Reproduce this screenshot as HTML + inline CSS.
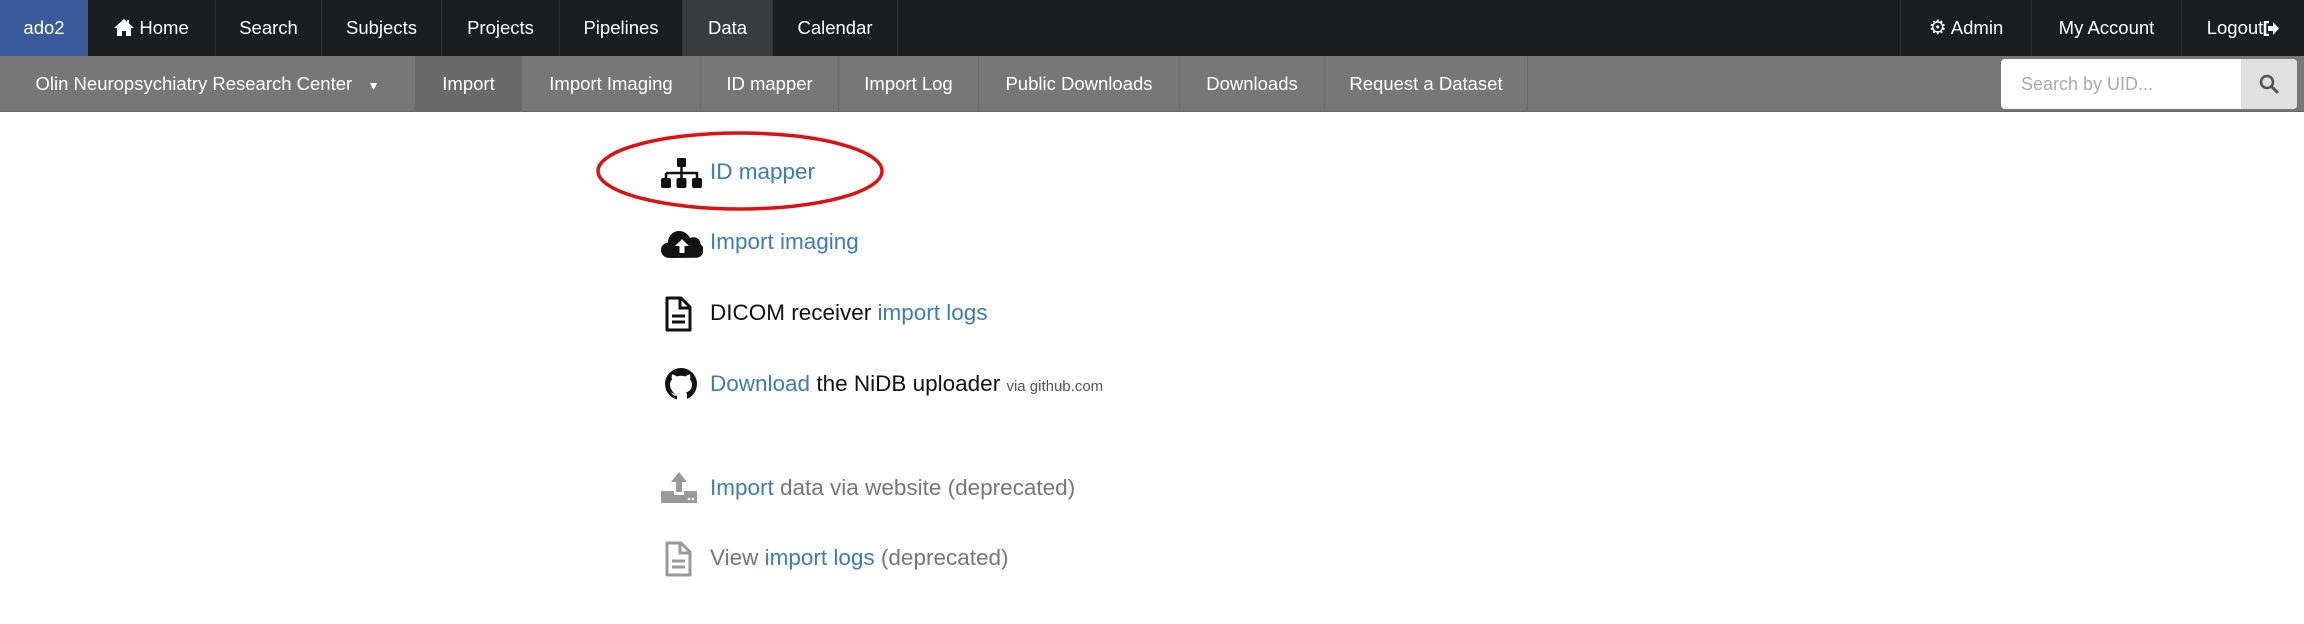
<!DOCTYPE html>
<html><head><meta charset="utf-8"><style>
*{box-sizing:border-box;margin:0;padding:0}
body{width:2304px;height:624px;background:#fff;font-family:"Liberation Sans",sans-serif;position:relative;overflow:hidden}
.bar1{position:absolute;left:0;top:0;width:2304px;height:56px;background:#1c1d1f}
.bar2{position:absolute;left:0;top:56px;width:2304px;height:56px;background:#777;border-bottom:1px solid #666}
.it{position:absolute;top:0;height:56px;line-height:56px;text-align:center;color:#fff;font-size:18.5px;border-right:1px solid #333}
.bar2 .it{border-right:1px solid #6a6a6a;color:#fff}
.row{position:absolute;left:661px;font-size:22.5px;color:#111;height:34px;line-height:34px;white-space:nowrap}
.row svg{position:absolute;left:0;top:3px}
.row span.t{position:absolute;left:49px}
a{color:#3c7bbf;text-decoration:none}
.g{color:#777}
</style></head><body>
<div class="bar1">
<div class="it" style="left:0;width:88px;background:#3a5a9c;border:none">ado2</div>
<div class="it" style="left:88px;width:128px"><svg width="20" height="17" viewBox="0 0 20 17" style="vertical-align:-2px"><path d="M10 0L0 9h3v8h5v-5h4v5h5V9h3L15 4.5V1h-2v1.7z" fill="#fff"/></svg> Home</div>
<div class="it" style="left:216px;width:106px">Search</div>
<div class="it" style="left:322px;width:120px">Subjects</div>
<div class="it" style="left:442px;width:118px">Projects</div>
<div class="it" style="left:560px;width:123px">Pipelines</div>
<div class="it" style="left:683px;width:90px;background:#3a3b3d">Data</div>
<div class="it" style="left:773px;width:125px">Calendar</div>
<div class="it" style="left:1900px;width:132px;border-left:1px solid #333"><span style="font-size:20px">⚙</span> Admin</div>
<div class="it" style="left:2032px;width:150px">My Account</div>
<div class="it" style="left:2182px;width:122px;border:none">Logout<svg width="16" height="15" viewBox="0 0 16 15" style="vertical-align:-2px"><path d="M6 1H2v13h4" stroke="#fff" stroke-width="2.5" fill="none"/><path d="M5 5h5V1l6 6.5-6 6.5v-4H5z" fill="#fff"/></svg></div>
</div>
<div class="bar2">
<div class="it" style="left:0;width:416px">Olin Neuropsychiatry Research Center &nbsp; <span style="font-size:12px">▼</span></div>
<div class="it" style="left:416px;width:106px;background:#6a6a6a">Import</div>
<div class="it" style="left:522px;width:179px">Import Imaging</div>
<div class="it" style="left:701px;width:138px">ID mapper</div>
<div class="it" style="left:839px;width:140px">Import Log</div>
<div class="it" style="left:979px;width:201px">Public Downloads</div>
<div class="it" style="left:1180px;width:145px">Downloads</div>
<div class="it" style="left:1325px;width:203px">Request a Dataset</div>
<div style="position:absolute;left:2001px;top:3px;width:296px;height:50px;background:#fff;border-radius:4px;overflow:hidden">
<span style="position:absolute;left:20px;top:0;line-height:50px;font-size:18px;color:#aaa">Search by UID...</span>
<div style="position:absolute;left:240px;top:0;width:56px;height:50px;background:#e0e0e0"><svg width="20" height="20" viewBox="0 0 20 20" style="position:absolute;left:18px;top:15px"><circle cx="8" cy="8" r="6" stroke="#555" stroke-width="2.6" fill="none"/><path d="M12.5 12.5L18 18" stroke="#555" stroke-width="3" stroke-linecap="round"/></svg></div>
</div>
</div>

<svg style="position:absolute;left:594px;top:130px" width="292" height="82"><ellipse cx="146" cy="41" rx="142" ry="38" fill="none" stroke="#e01010" stroke-width="3.5"/></svg>

<div class="row" style="top:155px"><svg width="42" height="32" viewBox="0 0 42 32"><rect x="16" y="0" width="9" height="9" rx="1.5" fill="#111"/><path d="M20.5 9v6M5 15h31v5M5 15v5M20.5 15v5" stroke="#111" stroke-width="2.5" fill="none"/><rect x="0" y="20" width="10" height="10" rx="2" fill="#111"/><rect x="15.5" y="20" width="10" height="10" rx="2" fill="#111"/><rect x="31" y="20" width="10" height="10" rx="2" fill="#111"/></svg><span class="t"><a>ID mapper</a></span></div>

<div class="row" style="top:225px"><svg width="42" height="32" viewBox="0 0 42 32"><path d="M9 30C3 30 0 26 0 22c0-4 3-7 7-7.5C7 8 12 3 18 3c5 0 9 3 11 7 1-.5 2-.8 3.5-.8 4 0 7 3 7 7 2 1.5 3 3.5 3 6 0 4-3 7.5-7 7.5z" fill="#111"/><path d="M21 11l-7 7h4.5v7h5v-7H28z" fill="#fff"/></svg><span class="t"><a>Import imaging</a></span></div>

<div class="row" style="top:296px"><svg width="42" height="36" viewBox="0 0 42 36" style="top:0"><path d="M6 2h14l9 9v23H6z" fill="none" stroke="#111" stroke-width="3" stroke-linejoin="round"/><path d="M19 2v10h10" fill="none" stroke="#111" stroke-width="3"/><path d="M11 20h13M11 26h13" stroke="#111" stroke-width="3"/></svg><span class="t">DICOM receiver <a>import logs</a></span></div>

<div class="row" style="top:367px"><svg width="42" height="36" viewBox="0 0 36 36" style="top:0"><circle cx="17" cy="17" r="16" fill="#111"/><path d="M13 33.5v-5c-4 1-5-2-6-3 2 0 3 2 4 2-2-3-5-5-5-10 0-2 1-4 2-5-.5-1-.5-3 0-5 2 0 3 1 5 2 3-1 5-1 8 0 2-1 3-2 5-2 .5 2 .5 4 0 5 1 1 2 3 2 5 0 5-3 7-6 8 1 1 1 2 1 3v5z" fill="#fff"/></svg><span class="t"><a>Download</a> the NiDB uploader <span style="font-size:15px;color:#555">via github.com</span></span></div>

<div class="row g" style="top:471px"><svg width="42" height="36" viewBox="0 0 42 36" style="top:-2px"><path d="M10 13L18 3l8 10h-5v10h-6V13z" fill="#999"/><path d="M0 22h13v4h10v-4h13v12H0z" fill="#999"/><circle cx="28" cy="30" r="1.3" fill="#fff"/><circle cx="32" cy="30" r="1.3" fill="#fff"/></svg><span class="t"><a>Import</a> data via website (deprecated)</span></div>

<div class="row g" style="top:541px"><svg width="42" height="36" viewBox="0 0 42 36" style="top:0"><path d="M6 2h14l9 9v23H6z" fill="none" stroke="#999" stroke-width="3" stroke-linejoin="round"/><path d="M19 2v10h10" fill="none" stroke="#999" stroke-width="3"/><path d="M11 20h13M11 26h13" stroke="#999" stroke-width="3"/></svg><span class="t">View <a>import logs</a> (deprecated)</span></div>
</body></html>
